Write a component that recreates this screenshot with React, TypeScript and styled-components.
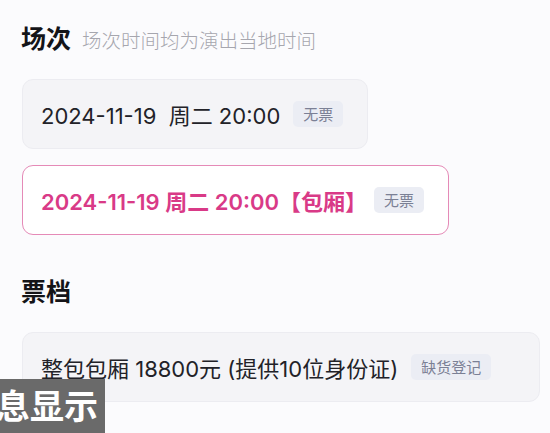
import React from "react";
import styled, { createGlobalStyle } from "styled-components";

const GlobalStyle = createGlobalStyle`
  html, body {
    margin: 0;
    padding: 0;
    background: #fbfbfd;
  }
  body {
    font-family: "Inter", "Noto Sans CJK SC", "Noto Sans", sans-serif;
    color: #1f1f24;
  }
`;

interface ISession {
  label: string;
  status: string;
  selected?: boolean;
}

const sessions: ISession[] = [
  { label: "2024-11-19  周二 20:00", status: "无票" },
  { label: "2024-11-19 周二 20:00【包厢】", status: "无票", selected: true },
];

const App: React.FC = () => {
  return (
    <Page>
      <GlobalStyle />
      <Section>
        <HeadingRow>
          <Heading>场次</Heading>
          <Hint>场次时间均为演出当地时间</Hint>
        </HeadingRow>
        <CardList>
          {sessions.map((s) => (
            <Card key={s.label} $selected={s.selected}>
              <CardText $selected={s.selected}>{s.label}</CardText>
              <Badge>{s.status}</Badge>
            </Card>
          ))}
        </CardList>
      </Section>
      <Section>
        <HeadingRow>
          <Heading>票档</Heading>
        </HeadingRow>
        <CardList>
          <Card $wide>
            <CardText>整包包厢 18800元 (提供10位身份证)</CardText>
            <Badge>缺货登记</Badge>
          </Card>
        </CardList>
      </Section>
      <Subtitle>息显示</Subtitle>
    </Page>
  );
};

const Page = styled.div`
  position: relative;
  width: 550px;
  height: 433px;
  overflow: hidden;
  padding: 20px 0 0 21px;
  box-sizing: border-box;
  display: flex;
  flex-direction: column;
  gap: 38px;
`;

const Section = styled.section`
  display: flex;
  flex-direction: column;
  gap: 25px;
`;

const HeadingRow = styled.div`
  display: flex;
  align-items: baseline;
  gap: 11px;
`;

const Heading = styled.h2`
  margin: 0;
  font-family: "Noto Sans CJK SC", sans-serif;
  font-size: 25px;
  line-height: 34px;
  font-weight: 700;
  color: #141418;
`;

const Hint = styled.span`
  font-family: "Noto Sans CJK SC", sans-serif;
  font-size: 19.5px;
  font-weight: 300;
  color: #a6a6ae;
`;

const CardList = styled.div`
  display: flex;
  flex-direction: column;
  align-items: flex-start;
  gap: 16px;
`;

const Card = styled.div<{ $selected?: boolean; $wide?: boolean }>`
  display: flex;
  align-items: center;
  gap: 13px;
  box-sizing: border-box;
  height: 70px;
  padding: 0 24px 0 18px;
  margin-left: 1px;
  border-radius: 11px;
  width: ${(p) => (p.$wide ? "518px" : "auto")};
  background: ${(p) => (p.$selected ? "#ffffff" : "#f4f4f7")};
  border: 1px solid ${(p) => (p.$selected ? "#e58ab7" : "#ececf1")};
`;

const CardText = styled.span<{ $selected?: boolean }>`
  font-size: 22px;
  white-space: pre;
  font-weight: ${(p) => (p.$selected ? 600 : 400)};
  color: ${(p) => (p.$selected ? "#d93a87" : "#222228")};
  margin-right: ${(p) => (p.$selected ? "-6px" : "0")};
`;

const Badge = styled.span`
  font-family: "Noto Sans CJK SC", sans-serif;
  font-size: 15px;
  line-height: 26px;
  padding: 0 10px;
  border-radius: 5px;
  background: #ebedf4;
  color: #7b8095;
`;

const Subtitle = styled.div`
  position: absolute;
  left: 0;
  bottom: 0;
  width: 105px;
  height: 54px;
  background: #6a6a6a;
  color: #ffffff;
  font-family: "Noto Sans CJK SC", sans-serif;
  font-size: 34px;
  font-weight: 700;
  line-height: 52px;
  display: flex;
  justify-content: flex-end;
  padding-right: 7px;
  box-sizing: border-box;
  white-space: nowrap;
  overflow: hidden;
`;

export default App;
